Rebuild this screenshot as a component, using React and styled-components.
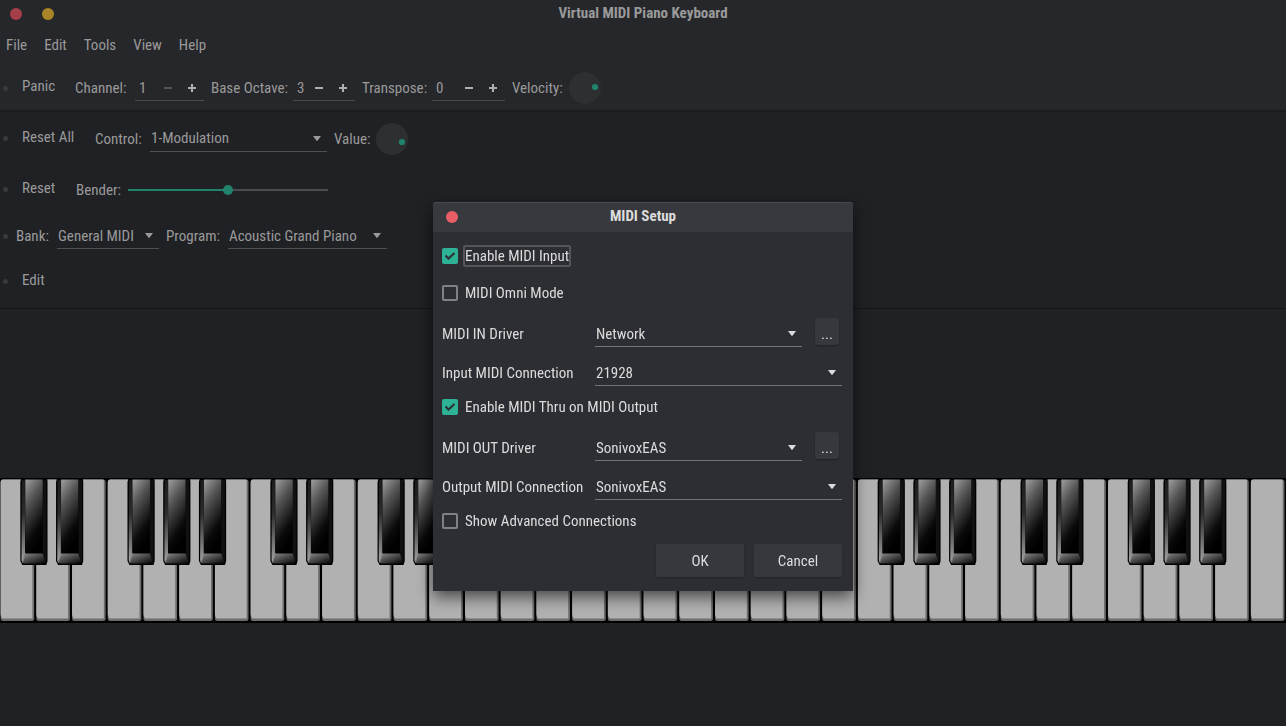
import React, { useState } from "react";
import styled, { createGlobalStyle } from "styled-components";

const WHITE_KEYS = 36;
const KEY_WIDTH = 1286 / WHITE_KEYS;
const BLACK_AFTER = [0, 1, 3, 4, 5];

const Caret = () => (
  <CaretIcon viewBox="0 0 8 5" aria-hidden="true">
    <path d="M0 0h8L4.6 4.6a.8.8 0 0 1-1.2 0z" />
  </CaretIcon>
);

const Select = ({ id, options }) => (
  <SelectBox>
    <NativeSelect id={id}>
      {options.map((option) => (
        <option key={option}>{option}</option>
      ))}
    </NativeSelect>
    <Caret />
  </SelectBox>
);

const Spin = ({ id, start, min }) => {
  const [value, setValue] = useState(start);
  return (
    <SpinBox>
      <SpinInput
        id={id}
        inputMode="numeric"
        value={value}
        onChange={(e) => setValue(Number(e.target.value) || 0)}
      />
      <SpinButton
        aria-label="Decrease"
        disabled={value <= min}
        onClick={() => setValue(value - 1)}
      >
        <svg width="8" height="8" viewBox="0 0 8 8">
          <path d="M0 3h8v2H0z" />
        </svg>
      </SpinButton>
      <SpinButton aria-label="Increase" onClick={() => setValue(value + 1)}>
        <svg width="8" height="8" viewBox="0 0 8 8">
          <path d="M0 3h3V0h2v3h3v2H5v3H3V5H0z" />
        </svg>
      </SpinButton>
    </SpinBox>
  );
};

const Dial = ({ id, cy, value }) => (
  <DialBox>
    <DialFace viewBox="0 0 32 32" aria-hidden="true">
      <circle cx="16" cy="16" r="16" fill="#2e2f31" />
      <circle cx="26" cy={cy} r="3.1" fill="#22836c" />
    </DialFace>
    <DialInput id={id} type="range" min="0" max="127" defaultValue={value} />
  </DialBox>
);

const Check = ({ children, checked, focused }) => (
  <CheckLabel>
    <CheckInput type="checkbox" defaultChecked={checked} />
    <CheckMark viewBox="0 0 16 16" aria-hidden="true">
      <path d="M3.500 7.500l3 3L12.500 5" />
    </CheckMark>
    <CheckText $focused={focused}>{children}</CheckText>
  </CheckLabel>
);

const WhiteKey = ({ x }) => (
  <g transform={`translate(${x} 0)`}>
    <rect x="0.600" y="1.600" width="33.600" height="141.400" rx="2.500" fill="#6c6c6c" />
    <path
      d="M.6 5q0-3.400 2.400-3.400h28.400q1 0 1 1.400v137.400H2.600q-1.200 0-2-4z"
      fill="#b1b1b1"
    />
  </g>
);

const BlackKey = ({ x }) => (
  <g transform={`translate(${x} 0)`}>
    <path d="M1 0h25.500q.7 2 .7 4v79l-1.200 4H2l-2-4V4z" fill="#000" />
    <path d="M1.500 2h3.300v74L2 84.500q-.8-1-.8-3z" fill="url(#side)" />
    <path d="M5 1.500h17.500V75H5z" fill="url(#face)" />
    <path d="M5 75.500h17.500l3 9q-.6 1-2 1H3.600q-1.200 0-1.600-1z" fill="url(#lip)" />
    <path d="M22.500 2h3.500v80l-.6 1.500-2.900-8z" fill="#111" />
    <path d="M5 75.500L2.200 84.500" stroke="#999" strokeWidth=".7" />
  </g>
);

const Piano = () => {
  const whites = [...Array(WHITE_KEYS).keys()];
  const blacks = whites.filter(
    (i) => BLACK_AFTER.includes(i % 7) && i < WHITE_KEYS - 1
  );
  return (
    <PianoDrawing viewBox="0 0 1286 145" role="img" aria-label="Piano keyboard">
      <defs>
        <linearGradient id="face" x1="0" y1="0" x2=".35" y2="1">
          <stop offset="0" stopColor="#a0a0a0" />
          <stop offset=".35" stopColor="#545454" />
          <stop offset=".8" stopColor="#0a0a0a" />
          <stop offset="1" stopColor="#000" />
        </linearGradient>
        <linearGradient id="side" x1="0" y1="0" x2="0" y2="1">
          <stop offset="0" stopColor="#1c1c1c" />
          <stop offset=".4" stopColor="#2c2c2c" />
          <stop offset="1" stopColor="#a4a4a4" />
        </linearGradient>
        <linearGradient id="lip" x1="0" y1="0" x2=".9" y2="1">
          <stop offset="0" stopColor="#8a8a8a" />
          <stop offset="1" stopColor="#080808" />
        </linearGradient>
      </defs>
      <rect width="1286" height="145" fill="#000" />
      {whites.map((i) => (
        <WhiteKey key={i} x={i * KEY_WIDTH} />
      ))}
      {blacks.map((i) => (
        <BlackKey key={i} x={(i + 1) * KEY_WIDTH - 15.4} />
      ))}
    </PianoDrawing>
  );
};

const SetupDialog = () => (
  <Overlay>
    <Dialog role="dialog" aria-labelledby="setup-title">
      <DialogBar>
        <WindowButton $color="#e95d66" aria-label="Close" />
        <Title id="setup-title">MIDI Setup</Title>
      </DialogBar>
      <DialogBody>
        <CheckGroup>
          <Check checked focused>
            Enable MIDI Input
          </Check>
          <Check>MIDI Omni Mode</Check>
        </CheckGroup>
        <FieldGroup>
          <label htmlFor="in-driver">MIDI IN Driver</label>
          <DriverRow>
            <Select id="in-driver" options={["Network", "SonivoxEAS"]} />
            <MoreButton aria-label="Configure input driver">...</MoreButton>
          </DriverRow>
          <label htmlFor="in-conn">Input MIDI Connection</label>
          <Select id="in-conn" options={["21928"]} />
        </FieldGroup>
        <Check checked>Enable MIDI Thru on MIDI Output</Check>
        <FieldGroup>
          <label htmlFor="out-driver">MIDI OUT Driver</label>
          <DriverRow>
            <Select id="out-driver" options={["SonivoxEAS", "Network"]} />
            <MoreButton aria-label="Configure output driver">...</MoreButton>
          </DriverRow>
          <label htmlFor="out-conn">Output MIDI Connection</label>
          <Select id="out-conn" options={["SonivoxEAS"]} />
        </FieldGroup>
        <Check>Show Advanced Connections</Check>
        <Actions>
          <ActionButton>OK</ActionButton>
          <ActionButton>Cancel</ActionButton>
        </Actions>
      </DialogBody>
    </Dialog>
  </Overlay>
);

const App = () => {
  const [bend, setBend] = useState(50);
  return (
    <Window>
      <GlobalStyle />
      <Header>
        <TitleBar>
          <WindowButton $color="#a43e48" aria-label="Close" />
          <WindowButton $color="#a98528" aria-label="Minimize" />
          <Title>Virtual MIDI Piano Keyboard</Title>
        </TitleBar>
        <MenuBar>
          {["File", "Edit", "Tools", "View", "Help"].map((name) => (
            <MenuButton key={name}>{name}</MenuButton>
          ))}
        </MenuBar>
        <ToolRow $height={44}>
          <Handle />
          <ToolButton $width={53}>Panic</ToolButton>
          <Label htmlFor="channel" $width={60}>Channel:</Label>
          <Field $width={69}>
            <Spin id="channel" start={1} min={1} />
          </Field>
          <Label htmlFor="octave" $width={82}>Base Octave:</Label>
          <Field $width={62}>
            <Spin id="octave" start={3} min={0} />
          </Field>
          <Label htmlFor="transpose" $width={70}>Transpose:</Label>
          <Field $width={73}>
            <Spin id="transpose" start={0} min={-12} />
          </Field>
          <Label htmlFor="velocity" $width={57}>Velocity:</Label>
          <Dial id="velocity" cy={15} value={100} />
        </ToolRow>
      </Header>
      <Toolbars>
        <ToolRow $height={51}>
          <Handle />
          <ToolButton $width={73}>Reset All</ToolButton>
          <Label htmlFor="control" $width={55}>Control:</Label>
          <Field $width={177}>
            <Select id="control" options={["1-Modulation", "7-Volume"]} />
          </Field>
          <Label htmlFor="value" $width={42}>Value:</Label>
          <Dial id="value" cy={19} value={110} />
        </ToolRow>
        <ToolRow $height={51}>
          <Handle />
          <ToolButton $width={54}>Reset</ToolButton>
          <Label htmlFor="bender" $width={52}>Bender:</Label>
          <Slider
            id="bender"
            type="range"
            value={bend}
            onChange={(e) => setBend(Number(e.target.value))}
            style={{ "--fill": `${bend}%` }}
          />
        </ToolRow>
        <ToolRow $height={42}>
          <Handle $tight />
          <Label htmlFor="bank" $width={41}>Bank:</Label>
          <Field $width={102}>
            <Select id="bank" options={["General MIDI"]} />
          </Field>
          <Label htmlFor="program" $width={62}>Program:</Label>
          <Field $width={159}>
            <Select id="program" options={["Acoustic Grand Piano"]} />
          </Field>
        </ToolRow>
        <ToolRow $height={49}>
          <Handle />
          <ToolButton $width={53}>Edit</ToolButton>
        </ToolRow>
      </Toolbars>
      <Stage>
        <Piano />
      </Stage>
      <SetupDialog />
    </Window>
  );
};

const GlobalStyle = createGlobalStyle`
  * {
    box-sizing: border-box;
  }
  body {
    margin: 0;
    background: #202125;
  }
  body, button, input, select {
    font-family: "Ubuntu Condensed", "Roboto Condensed", Roboto, sans-serif;
    font-size: 15px;
  }
  button, input, select {
    margin: 0;
    padding: 0;
    border: 0;
    color: inherit;
    background: none;
  }
`;
const Window = styled.div`
  display: flex;
  flex-direction: column;
  min-height: 100vh;
  color: #9a9a9a;
  line-height: 20px;
`;
const Header = styled.header`
  background: #26272b;
  border-bottom: 2px solid #1b1c1f;
`;
const TitleBar = styled.div`
  display: grid;
  grid-template-columns: 12px 12px 1fr 44px;
  column-gap: 20px;
  align-items: center;
  height: 28px;
  padding: 0 10px;
`;
const WindowButton = styled.button`
  width: 12px;
  height: 12px;
  border-radius: 50%;
  background: ${(p) => p.$color};
`;
const Title = styled.h1`
  margin: 0;
  padding-bottom: 2px;
  font-size: 15px;
  font-weight: 700;
  line-height: 20px;
  text-align: center;
`;
const MenuBar = styled.nav`
  display: flex;
  align-items: center;
  gap: 17px;
  height: 38px;
  padding: 0 6px 5px;
`;
const MenuButton = styled.button`
  line-height: 20px;
`;
const Toolbars = styled.section`
  padding: 1px 0 2px;
  border-bottom: 1px solid #151619;
`;
const ToolRow = styled.div`
  display: flex;
  align-items: center;
  height: ${(p) => p.$height}px;
`;
const Handle = styled.span`
  width: 5px;
  height: 5px;
  margin: 0 ${(p) => (p.$tight ? 8 : 14)}px 0 3px;
  border-radius: 50%;
  background: #393a3e;
`;
const ToolButton = styled.button`
  width: ${(p) => p.$width}px;
  padding-bottom: 4px;
  text-align: left;
  white-space: nowrap;
`;
const Label = styled.label`
  width: ${(p) => p.$width}px;
  white-space: nowrap;
`;
const Field = styled.div`
  width: ${(p) => p.$width}px;
  margin-right: 7px;
`;
const SelectBox = styled.div`
  display: grid;
  grid-template-columns: 1fr 14px;
  align-items: center;
  flex: 1;
  height: 26px;
  border-bottom: 1px solid;
  border-color: color-mix(in srgb, currentColor 40%, transparent);
`;
const NativeSelect = styled.select`
  grid-area: 1 / 1 / 2 / 3;
  width: 100%;
  height: 25px;
  padding: 0 20px 0 1px;
  appearance: none;
  outline: none;
`;
const CaretIcon = styled.svg`
  grid-area: 1 / 2;
  width: 8px;
  height: 5px;
  fill: currentColor;
  pointer-events: none;
`;
const SpinBox = styled.div`
  display: flex;
  height: 26px;
  border-bottom: 1px solid #4b4c50;
`;
const SpinInput = styled.input`
  flex: 1;
  min-width: 0;
  padding-left: 4px;
`;
const SpinButton = styled.button`
  display: grid;
  place-items: center;
  width: 24px;
  fill: #b0b0b0;

  &:disabled {
    fill: #55565a;
  }
`;
const DialBox = styled.div`
  display: grid;
  width: 32px;
  height: 32px;
`;
const DialFace = styled.svg`
  grid-area: 1 / 1;
  width: 32px;
  height: 32px;
`;
const DialInput = styled.input`
  grid-area: 1 / 1;
  width: 32px;
  height: 32px;
  opacity: 0;
`;
const Slider = styled.input`
  width: 200px;
  height: 20px;
  appearance: none;

  &::-webkit-slider-runnable-track {
    height: 2px;
    background: linear-gradient(
      to right,
      #22836c var(--fill),
      #4b4c50 var(--fill)
    );
  }
  &::-webkit-slider-thumb {
    appearance: none;
    width: 10px;
    height: 10px;
    margin-top: -4px;
    border-radius: 50%;
    background: #22836c;
  }
`;
const Stage = styled.main`
  display: flex;
  flex: 1;
  align-items: center;
  padding-top: 65px;
`;
const PianoDrawing = styled.svg`
  width: 100%;
`;
const Overlay = styled.div`
  position: fixed;
  inset: 0;
  display: flex;
  justify-content: center;
  align-items: flex-start;
  padding-top: 202px;
`;
const Dialog = styled.section`
  width: 420px;
  color: #dcdcdc;
  background: #2d2e33;
  border-radius: 3px 3px 0 0;
  box-shadow: 0 6px 16px rgba(0, 0, 0, 0.6);
`;
const DialogBar = styled.div`
  display: grid;
  grid-template-columns: 12px 1fr 12px;
  align-items: center;
  height: 30px;
  padding: 0 13px 1px;
  background: #38393e;
  border-top: 1px solid #4a4b50;
  border-radius: 3px 3px 0 0;
`;
const DialogBody = styled.div`
  padding: 13px 11px 14px 9px;
`;
const CheckGroup = styled.div`
  display: grid;
  gap: 15px;
`;
const CheckLabel = styled.label`
  display: grid;
  grid-template-columns: 16px auto;
  column-gap: 5px;
  justify-content: start;
  align-items: center;
  height: 22px;
`;
const CheckInput = styled.input`
  grid-area: 1 / 1;
  width: 16px;
  height: 16px;
  appearance: none;
  border: 2px solid #808184;
  border-radius: 2px;

  &:checked {
    border: 0;
    background: #2db296;
  }
`;
const CheckMark = styled.svg`
  grid-area: 1 / 1;
  width: 16px;
  height: 16px;
  fill: none;
  stroke: #2d2e33;
  stroke-width: 2;
  pointer-events: none;

  ${CheckInput}:not(:checked) + & {
    visibility: hidden;
  }
`;
const CheckText = styled.span`
  border: 2px solid ${(p) => (p.$focused ? "#54555a" : "transparent")};
  border-radius: 2px;
  line-height: 18px;
`;
const FieldGroup = styled.div`
  display: grid;
  grid-template-columns: 153px 1fr;
  row-gap: 13px;
  align-items: center;
  margin: 17px 0 10px;
  white-space: nowrap;
`;
const DriverRow = styled.div`
  display: flex;
  gap: 13px;
  height: 26px;
  padding-right: 3px;
`;
const MoreButton = styled.button`
  width: 24px;
  height: 27px;
  margin-top: -3px;
  padding-top: 4px;
  border-radius: 4px;
  background: #35393e;
  box-shadow: 0 1px 2px rgba(0, 0, 0, 0.3);
`;
const Actions = styled.div`
  display: flex;
  justify-content: flex-end;
  gap: 10px;
  margin-top: 12px;
`;
const ActionButton = styled.button`
  width: 88px;
  height: 33px;
  border-radius: 2px;
  background: #35393e;
  box-shadow: 0 1px 2px rgba(0, 0, 0, 0.2);
`;
export default App;
